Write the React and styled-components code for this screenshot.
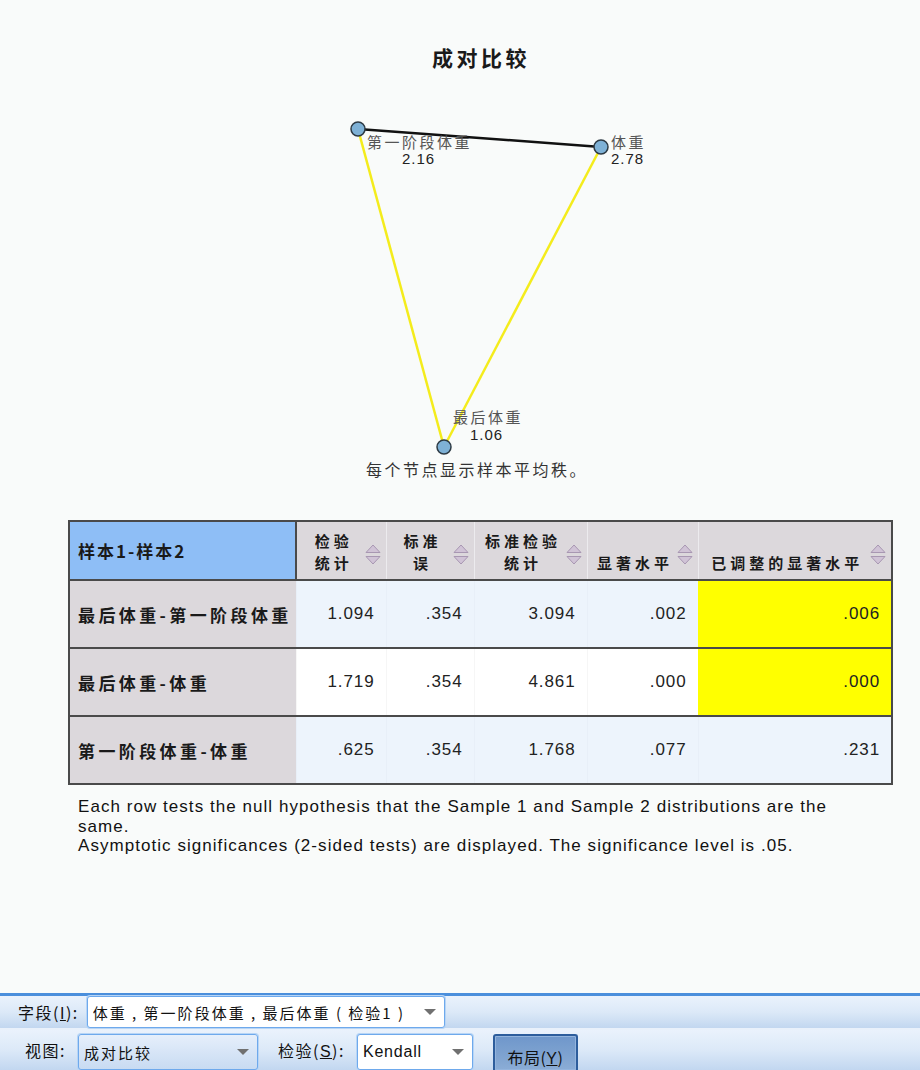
import React from "react";
import styled, { createGlobalStyle } from "styled-components";

const Global = createGlobalStyle`
  html, body { margin: 0; padding: 0; background: #f9fbfa; }
  body { font-family: "Liberation Sans", "Noto Sans CJK SC", sans-serif; color: #111; }
`;

const Page = styled.div`
  min-height: 100vh;
  display: flex;
  flex-direction: column;
  background: #f9fbfa;
`;

const Title = styled.h1`
  margin: 44px 0 0;
  padding-left: 42px;
  text-align: center;
  font-family: "Noto Sans CJK SC", sans-serif;
  font-weight: 700;
  font-size: 21px;
  letter-spacing: 3.5px;
  line-height: 26px;
  color: #1a1a1a;
`;

const ChartSvg = styled.svg`
  display: block;
  margin-top: 30px;
  width: 920px;
  height: 360px;
`;

const Caption = styled.div`
  padding-left: 34px;
  text-align: center;
  font-family: "Noto Sans CJK SC", sans-serif;
  font-size: 16px;
  letter-spacing: 2.5px;
  line-height: 18px;
  color: #333;
`;

const Table = styled.table`
  margin: 42px 0 0 68px;
  width: 823px;
  border-collapse: collapse;
  border: 2px solid #4a4a4a;
  table-layout: fixed;
`;

const Row = styled.tr`
  height: ${(p) => p.$h}px;
  border-bottom: 2px solid #4a4a4a;
`;

const CornerCell = styled.th`
  background: #8ebef6;
  border-right: 2px solid #4a4a4a;
  text-align: left;
  padding: 0 0 0 8px;
  font-family: "Noto Sans CJK SC", sans-serif;
  font-size: 17px;
  font-weight: 700;
  letter-spacing: 2px;
  color: #1a1a1a;
`;

const HeadCell = styled.th`
  background: #dcd8dc;
  border-left: 1px solid #ecebee;
  padding: 0 5px 5px 6px;
  vertical-align: bottom;
  font-family: "Noto Sans CJK SC", sans-serif;
  font-size: 15px;
  font-weight: 700;
  letter-spacing: 4px;
  line-height: 22px;
  color: #1a1a1a;
`;

const HeadInner = styled.div`
  display: flex;
  align-items: flex-end;
`;

const HeadText = styled.div`
  flex: 1;
  text-align: center;
`;

const HeadLine = styled.div`
  height: 22px;
  white-space: nowrap;
`;

const SortWrap = styled.div`
  flex: none;
  width: 16px;
  height: 24px;
  margin-bottom: 7px;
`;

const LabelCell = styled.td`
  background: #dcd8dc;
  padding: 0 0 0 8px;
  font-family: "Noto Sans CJK SC", sans-serif;
  font-size: 17px;
  font-weight: 700;
  letter-spacing: 3.4px;
  white-space: nowrap;
  color: #1a1a1a;
`;

const NumCell = styled.td`
  background: ${(p) => (p.$hl ? "#ffff00" : p.$shade ? "#edf4fc" : "#ffffff")};
  border-left: 1px solid ${(p) => (p.$hl ? "#ffff00" : p.$shade ? "#e8eff8" : "#f6f6f6")};
  text-align: right;
  padding: 0 11px 0 0;
  font-family: "Liberation Sans", sans-serif;
  font-size: 17px;
  letter-spacing: 0.9px;
  color: #222;
`;

const Notes = styled.div`
  margin: 12px 0 0 78px;
  width: 768px;
  font-family: "Liberation Sans", sans-serif;
  font-size: 17px;
  letter-spacing: 1.05px;
  line-height: 19.5px;
  color: #111;
`;

const Toolbar = styled.div`
  margin-top: auto;
  border-top: 3px solid #4b8fdc;
  box-shadow: inset 0 1px 0 #9cc6f2;
`;

const BarRow = styled.div`
  display: flex;
  align-items: center;
  height: ${(p) => p.$h}px;
  padding-left: ${(p) => p.$pl}px;
  background: linear-gradient(#eaf2fc, #dce9f8 50%, #c2d7f0);
  border-bottom: ${(p) => (p.$sep ? "2px solid #e9f1fb" : "none")};
  font-family: "Noto Sans CJK SC", sans-serif;
  font-size: 16px;
  color: #111;
`;

const Label = styled.span`
  letter-spacing: 1.5px;
  margin-right: ${(p) => p.$mr}px;
  margin-left: ${(p) => p.$ml || 0}px;
`;

const U = styled.span`
  text-decoration: underline;
  font-family: "Liberation Sans", sans-serif;
`;

const Combo = styled.div`
  display: flex;
  align-items: center;
  box-sizing: border-box;
  width: ${(p) => p.$w}px;
  height: ${(p) => p.$h}px;
  margin-top: ${(p) => p.$mt || 0}px;
  padding: 0 8px 0 5px;
  background: ${(p) => (p.$tinted ? "linear-gradient(#e6effb, #c8dbf2)" : "#ffffff")};
  border: 1px solid #6ea9ec;
  border-radius: 3px;
  box-shadow: 0 0 0 1px #b7d5f6;
  font-family: ${(p) => (p.$latin ? '"Liberation Sans", sans-serif' : '"Noto Sans CJK SC", sans-serif')};
  font-size: ${(p) => (p.$latin ? 16 : 15)}px;
  letter-spacing: ${(p) => (p.$latin ? "0.8px" : "2px")};
`;

const ComboText = styled.span`
  flex: 1;
  white-space: nowrap;
  overflow: hidden;
`;

const Arrow = styled.span`
  width: 0;
  height: 0;
  border-left: 6px solid transparent;
  border-right: 6px solid transparent;
  border-top: 6px solid #707070;
`;

const LayoutButton = styled.button`
  align-self: flex-end;
  box-sizing: border-box;
  width: 85px;
  height: 36px;
  margin-left: 20px;
  padding: 8px 0 0;
  border: 2px solid #2d5d9c;
  border-bottom: none;
  border-radius: 3px 3px 0 0;
  background: linear-gradient(#6f97cb, #7fa3d0 60%, #8badd6);
  box-shadow: inset 0 0 0 1px #93b4dd;
  font-family: "Noto Sans CJK SC", sans-serif;
  font-size: 16px;
  letter-spacing: 0.5px;
  color: #111;
  text-align: center;
`;

function SortIcon() {
  return (
    <SortWrap>
      <svg width="16" height="24" viewBox="0 0 16 24">
        <polygon points="8,2 15,9.5 1,9.5" fill="#d0c3d6" stroke="#a897b2" strokeWidth="1" />
        <polygon points="1,13.5 15,13.5 8,21" fill="#d0c3d6" stroke="#a897b2" strokeWidth="1" />
      </svg>
    </SortWrap>
  );
}

const headers = [
  ["检验", "统计"],
  ["标准", "误"],
  ["标准检验", "统计"],
  ["显著水平"],
  ["已调整的显著水平"],
];

const rows = [
  { label: "最后体重-第一阶段体重", vals: ["1.094", ".354", "3.094", ".002", ".006"], shade: true, hl: true },
  { label: "最后体重-体重", vals: ["1.719", ".354", "4.861", ".000", ".000"], shade: false, hl: true },
  { label: "第一阶段体重-体重", vals: [".625", ".354", "1.768", ".077", ".231"], shade: true, hl: false },
];

const nodes = [
  { x: 358, y: 29 },
  { x: 601, y: 47 },
  { x: 444, y: 347 },
];

function Chart() {
  const lbl = { fontFamily: '"Noto Sans CJK SC", sans-serif', fontSize: 15, fill: "#555" };
  const num = { fontFamily: '"Liberation Sans", sans-serif', fontSize: 15, fill: "#222" };
  return (
    <ChartSvg viewBox="0 0 920 360">
      <line x1={nodes[0].x} y1={nodes[0].y} x2={nodes[2].x} y2={nodes[2].y} stroke="#f4ec1c" strokeWidth="2.5" />
      <line x1={nodes[1].x} y1={nodes[1].y} x2={nodes[2].x} y2={nodes[2].y} stroke="#f4ec1c" strokeWidth="2.5" />
      <line x1={nodes[0].x} y1={nodes[0].y} x2={nodes[1].x} y2={nodes[1].y} stroke="#111" strokeWidth="2.5" />
      {nodes.map((n, i) => (
        <circle key={i} cx={n.x} cy={n.y} r="7" fill="#7eb1d6" stroke="#2d3a44" strokeWidth="1.5" />
      ))}
      <text x="367" y="48" letterSpacing="2.5" style={lbl}>第一阶段体重</text>
      <text x="402" y="64" letterSpacing="1" style={num}>2.16</text>
      <text x="611" y="48" letterSpacing="2.5" style={lbl}>体重</text>
      <text x="611" y="64" letterSpacing="1" style={num}>2.78</text>
      <text x="453" y="323" letterSpacing="2.5" style={lbl}>最后体重</text>
      <text x="470" y="340" letterSpacing="1" style={num}>1.06</text>
    </ChartSvg>
  );
}

export default function App() {
  return (
    <Page>
      <Global />
      <Title>成对比较</Title>
      <Chart />
      <Caption>每个节点显示样本平均秩。</Caption>
      <Table>
        <colgroup>
          <col style={{ width: 227 }} />
          <col style={{ width: 90 }} />
          <col style={{ width: 88 }} />
          <col style={{ width: 113 }} />
          <col style={{ width: 111 }} />
          <col style={{ width: 194 }} />
        </colgroup>
        <thead>
          <Row $h={59}>
            <CornerCell>样本1-样本2</CornerCell>
            {headers.map((h, i) => (
              <HeadCell key={i}>
                <HeadInner>
                  <HeadText>
                    {h.map((line, j) => (
                      <HeadLine key={j}>{line}</HeadLine>
                    ))}
                  </HeadText>
                  <SortIcon />
                </HeadInner>
              </HeadCell>
            ))}
          </Row>
        </thead>
        <tbody>
          {rows.map((r, i) => (
            <Row key={i} $h={68}>
              <LabelCell>{r.label}</LabelCell>
              {r.vals.map((v, j) => (
                <NumCell key={j} $shade={r.shade} $hl={r.hl && j === 4}>
                  {v}
                </NumCell>
              ))}
            </Row>
          ))}
        </tbody>
      </Table>
      <Notes>
        Each row tests the null hypothesis that the Sample 1 and Sample 2 distributions are the same.
        <br />
        Asymptotic significances (2-sided tests) are displayed. The significance level is .05.
      </Notes>
      <Toolbar>
        <BarRow $h={32} $pl={18} $sep>
          <Label $mr={8}>
            字段(<U>I</U>):
          </Label>
          <Combo $w={358} $h={32}>
            <ComboText>体重 , 第一阶段体重 , 最后体重 ( 检验1 )</ComboText>
            <Arrow />
          </Combo>
        </BarRow>
        <BarRow $h={40} $pl={25}>
          <Label $mr={12}>视图:</Label>
          <Combo $w={180} $h={36} $mt={4} $tinted>
            <ComboText>成对比较</ComboText>
            <Arrow />
          </Combo>
          <Label $ml={20} $mr={12}>
            检验(<U>S</U>):
          </Label>
          <Combo $w={116} $h={36} $mt={4} $latin>
            <ComboText>Kendall</ComboText>
            <Arrow />
          </Combo>
          <LayoutButton>
            布局(<U>Y</U>)
          </LayoutButton>
        </BarRow>
      </Toolbar>
    </Page>
  );
}
